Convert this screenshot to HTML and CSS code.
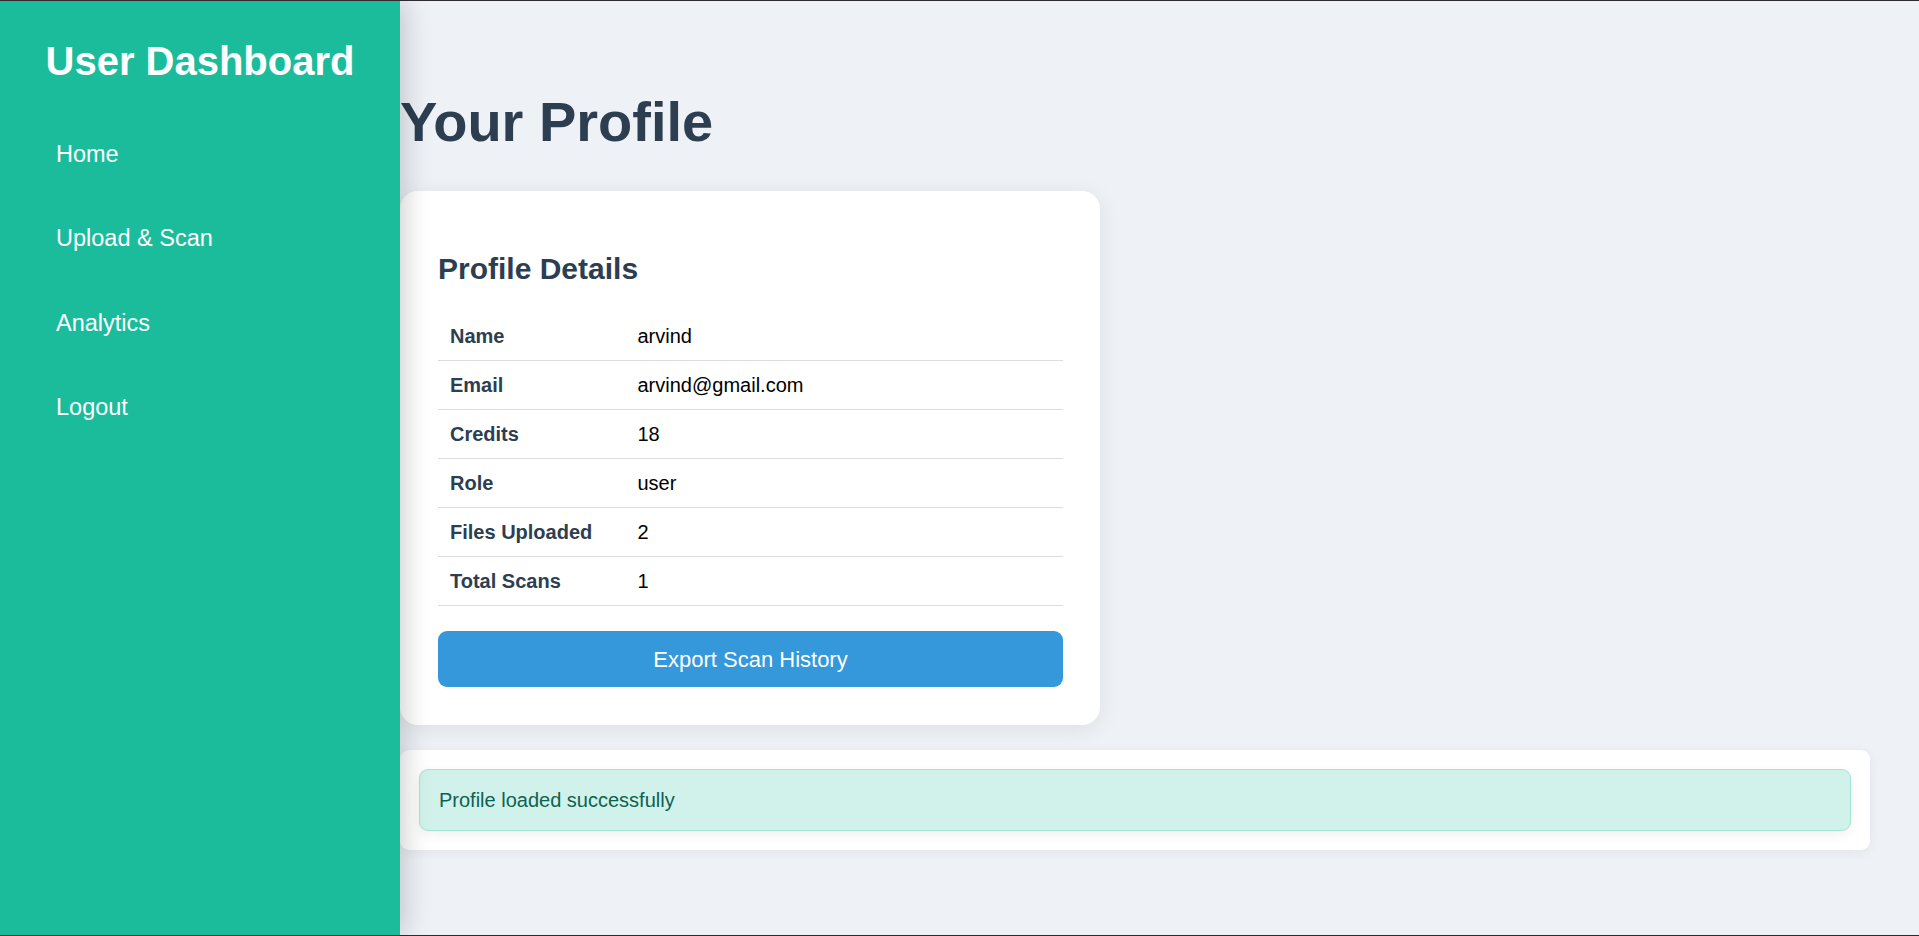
FILE: index.html
```html
<!DOCTYPE html>
<html lang="en">
<head>
<meta charset="utf-8">
<title>User Dashboard - Profile</title>
<link rel="stylesheet" href="styles.css">
</head>
<body>
<div class="app">
  <aside class="sidebar">
    <h2 class="brand">User Dashboard</h2>
    <nav class="nav">
      <a class="nav-link" href="#">Home</a>
      <a class="nav-link" href="#">Upload &amp; Scan</a>
      <a class="nav-link" href="#">Analytics</a>
      <a class="nav-link" href="#">Logout</a>
    </nav>
  </aside>
  <main class="main">
    <h1 class="page-title">Your Profile</h1>
    <section class="card">
      <h2 class="card-title">Profile Details</h2>
      <table class="details">
        <tbody>
          <tr><th>Name</th><td>arvind</td></tr>
          <tr><th>Email</th><td>arvind@gmail.com</td></tr>
          <tr><th>Credits</th><td>18</td></tr>
          <tr><th>Role</th><td>user</td></tr>
          <tr><th>Files Uploaded</th><td>2</td></tr>
          <tr><th>Total Scans</th><td>1</td></tr>
        </tbody>
      </table>
      <button class="btn-export" type="button">Export Scan History</button>
    </section>
    <section class="message-box">
      <div class="alert-success">Profile loaded successfully</div>
    </section>
  </main>
</div>
</body>
</html>
```

FILE: styles.css
```css
html, body {
  margin: 0;
  padding: 0;
}

body {
  font-family: "Liberation Sans", Arial, sans-serif;
  background: #eef2f7;
  border-top: 1px solid #2b2b30;
  border-bottom: 1px solid #2b2b30;
  height: 934px;
  overflow: hidden;
}

.app {
  display: flex;
  height: 934px;
}

.sidebar {
  flex: 0 0 400px;
  width: 400px;
  background: #1abc9c;
  color: #fff;
  position: relative;
  z-index: 2;
  box-shadow: 4px 0 26px rgba(0, 0, 0, 0.2);
  padding-top: 36.5px;
  box-sizing: border-box;
}

.brand {
  margin: 0;
  font-size: 40px;
  line-height: 46px;
  font-weight: bold;
  text-align: center;
}

.nav {
  display: flex;
  flex-direction: column;
  margin-top: 28.5px;
}

.nav-link {
  display: block;
  color: #fff;
  text-decoration: none;
  font-size: 23.5px;
  line-height: 27px;
  padding: 28.75px 0 28.75px 56px;
}

.main {
  flex: 1;
  padding: 89px 49px 0 0;
  box-sizing: border-box;
  min-width: 0;
}

.page-title {
  margin: 0 0 37px;
  font-size: 56px;
  line-height: 64px;
  font-weight: bold;
  color: #2c3e50;
}

.card {
  width: 700px;
  box-sizing: border-box;
  background: #fff;
  border-radius: 18px;
  padding: 38px 37px 38px 38px;
  box-shadow: 0 4px 22px rgba(0, 0, 0, 0.08);
}

.card-title {
  margin: 23px 0 26px;
  font-size: 30px;
  line-height: 34px;
  font-weight: bold;
  color: #2c3e50;
}

.details {
  width: 100%;
  border-collapse: collapse;
  font-size: 20px;
  line-height: 24px;
}

.details th,
.details td {
  padding: 12px 12px;
  border-bottom: 1px solid #dddddd;
  text-align: left;
  vertical-align: middle;
}

.details th {
  width: 30%;
  box-sizing: border-box;
  font-weight: bold;
  color: #2c3e50;
}

.details td {
  color: #000;
}

.btn-export {
  display: block;
  width: 100%;
  margin-top: 25px;
  padding: 15.5px 0;
  border: none;
  border-radius: 9px;
  background: #3498db;
  color: #fff;
  font-family: "Liberation Sans", Arial, sans-serif;
  font-size: 22px;
  line-height: 25px;
  cursor: pointer;
}

.message-box {
  margin-top: 25px;
  background: #fff;
  border-radius: 9px;
  padding: 19px;
  box-shadow: 0 2px 12px rgba(0, 0, 0, 0.06);
}

.alert-success {
  background: #d1f2eb;
  border: 1px solid #a3e4d7;
  border-radius: 9px;
  padding: 18px 19px;
  font-size: 20px;
  line-height: 24px;
  color: #0e6251;
  box-shadow: 0 4px 12px rgba(0, 0, 0, 0.06);
}
```
